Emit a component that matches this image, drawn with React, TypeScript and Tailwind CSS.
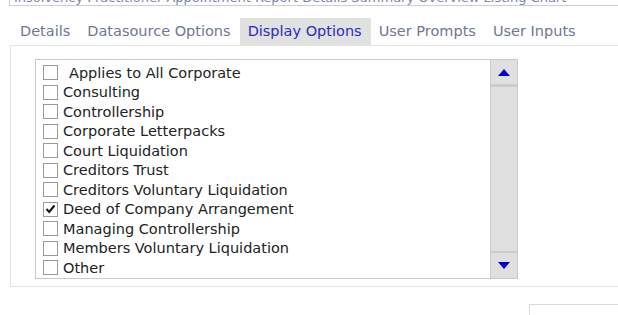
const items = [
  { label: "Applies to All Corporate", checked: false, pad: true },
  { label: "Consulting", checked: false },
  { label: "Controllership", checked: false },
  { label: "Corporate Letterpacks", checked: false },
  { label: "Court Liquidation", checked: false },
  { label: "Creditors Trust", checked: false },
  { label: "Creditors Voluntary Liquidation", checked: false },
  { label: "Deed of Company Arrangement", checked: true },
  { label: "Managing Controllership", checked: false },
  { label: "Members Voluntary Liquidation", checked: false },
  { label: "Other", checked: false },
];

const tabs = ["Details", "Datasource Options", "Display Options", "User Prompts", "User Inputs"];

const font = { fontFamily: "Tahoma, 'DejaVu Sans', 'Noto Sans', sans-serif" };

export default function App() {
  return (
    <div
      className="w-[618px] h-[315px] overflow-hidden bg-white text-[#222]"
      style={font}
    >
      <div className="ml-[9px] h-[6px] w-[620px] overflow-hidden border-l border-b border-[#cfcfcf]">
        <div className="-mt-[9px] pl-[4px] text-[13px] leading-[14px] text-[#7a86a8] whitespace-nowrap">
          Insolvency Practitioner Appointment Report Details Summary Overview Listing Chart
        </div>
      </div>

      <div className="mt-[12px] ml-[12px] flex h-[27px] items-center text-[14.5px]">
        {tabs.map((tab) => (
          <div
            key={tab}
            className={`h-full flex items-center pl-[8px] pr-[9px] ${
              tab === "Display Options" ? "bg-[#e1e1e1] text-[#2b2bbf]" : "text-[#6f7891]"
            }`}
          >
            {tab}
          </div>
        ))}
      </div>

      <div className="ml-[10px] w-[620px] h-[242px] border border-[#e3e3e3] pl-[24px] pt-[13px]">
        <div className="flex w-[483px] h-[220px] border border-[#c9c9c9]">
          <div className="flex-1 pl-[7px] pt-[3px]">
            {items.map((item) => (
              <div key={item.label} className="flex items-center h-[19.5px] text-[14.5px] leading-none">
                <div className="w-[15px] h-[15px] border border-[#9a9a9a] bg-white flex items-center justify-center">
                  {item.checked && (
                    <svg width="11" height="10" viewBox="0 0 11 10">
                      <path d="M1.5 5 L4.2 8 L9.5 1.5" fill="none" stroke="#111" strokeWidth="2" />
                    </svg>
                  )}
                </div>
                <span className={item.pad ? "ml-[11px]" : "ml-[5px]"}>{item.label}</span>
              </div>
            ))}
          </div>
          <div className="w-[27px] flex flex-col bg-[#e0e0e0] border-l border-[#c9c9c9]">
            <div className="h-[27px] border-b-[3px] border-[#cbcbcb] flex items-center justify-center">
              <svg width="12" height="7" viewBox="0 0 12 7">
                <path d="M6 0 L12 7 L0 7 Z" fill="#0000c8" />
              </svg>
            </div>
            <div className="flex-1" />
            <div className="h-[27px] border-t-[2px] border-[#cbcbcb] flex items-center justify-center">
              <svg width="12" height="7" viewBox="0 0 12 7">
                <path d="M0 0 L12 0 L6 7 Z" fill="#0000c8" />
              </svg>
            </div>
          </div>
        </div>
      </div>

      <div className="mt-[17px] ml-[529px] w-[100px] h-[20px] border border-[#dadada]" />
    </div>
  );
}
